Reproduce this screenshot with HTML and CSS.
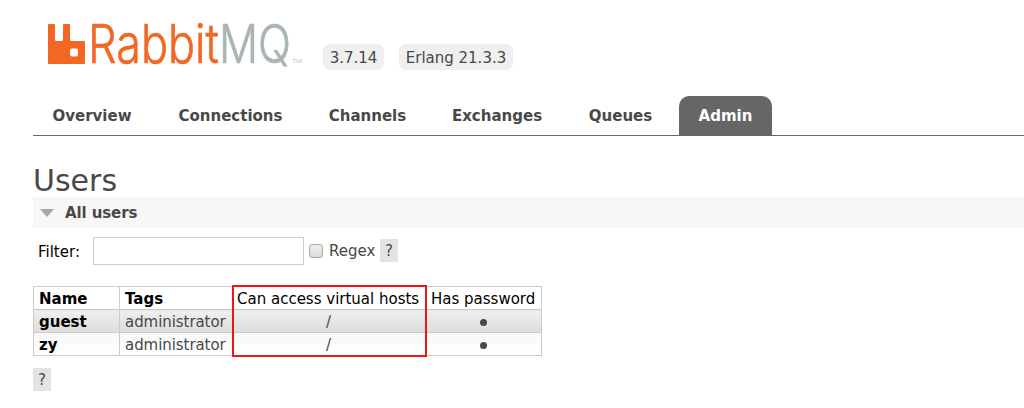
FILE: index.html
```html
<!DOCTYPE html>
<html lang="en">
<head>
<meta charset="utf-8">
<title>RabbitMQ Management</title>
<link rel="stylesheet" href="styles.css">
</head>
<body>
<header class="header">
  <svg class="logo" width="270" height="90" viewBox="0 -20 270 90" role="img" aria-label="RabbitMQ">
    <path class="logo-mark" fill-rule="evenodd" d="M1 4H6Q7 4 7 5V19.500Q7 21 8.500 21H13.500Q15 21 15 19.500V5Q15 4 16 4H21Q22 4 22 5V19.500Q22 21 23.500 21H36Q37 21 37 22V43Q37 44 36 44H1Q0 44 0 43V5Q0 4 1 4ZM24 28.500Q22 28.500 22 30.500V34Q22 36.500 24 36.500H28Q30 36.500 30 34V30.500Q30 28.500 28 28.500Z"/>
    <text class="logo-text orange" x="40" y="43" textLength="131" lengthAdjust="spacingAndGlyphs">Rabbit</text>
    <text class="logo-text gray" x="171" y="43" textLength="72" lengthAdjust="spacingAndGlyphs">MQ</text>
    <text class="logo-tm" x="244.500" y="43" textLength="9.500" lengthAdjust="spacingAndGlyphs">TM</text>
  </svg>
  <span class="version v1">3.7.14</span>
  <span class="version v2">Erlang 21.3.3</span>
</header>
<nav class="tabs">
  <a class="tab overview">Overview</a>
  <a class="tab connections">Connections</a>
  <a class="tab channels">Channels</a>
  <a class="tab exchanges">Exchanges</a>
  <a class="tab queues">Queues</a>
  <a class="tab admin">Admin</a>
</nav>
<main class="main">
  <h1 class="title">Users</h1>
  <h2 class="section"><svg class="arrow" width="14" height="8" viewBox="0 0 14 8"><path d="M0 0H14L7 8Z"/></svg>All users</h2>
  <div class="filter">
    <label class="filter-label" for="f">Filter:</label>
    <input class="filter-input" id="f" type="text">
    <span class="checkbox"></span>
    <span class="regex">Regex</span>
    <span class="help">?</span>
  </div>
  <div class="table-wrap">
    <table class="users">
      <colgroup><col class="c1"><col class="c2"><col class="c3"><col class="c4"></colgroup>
      <tr><th class="bold">Name</th><th class="bold">Tags</th><th>Can access virtual hosts</th><th>Has password</th></tr>
      <tr class="alt"><td class="bold">guest</td><td class="tag">administrator</td><td class="center">/</td><td class="center"><i class="dot"></i></td></tr>
      <tr class="plain"><td class="bold">zy</td><td class="tag">administrator</td><td class="center">/</td><td class="center"><i class="dot"></i></td></tr>
    </table>
    <div class="highlight"></div>
  </div>
  <span class="help bottom">?</span>
</main>
</body>
</html>
```
FILE: styles.css
```css
* { box-sizing: border-box; }
body { margin: 0; width: 1024px; height: 408px; overflow: hidden; background: #fff; color: #484848; font: 15px/20px Verdana, "DejaVu Sans", sans-serif; }
.header { display: flex; height: 96px; padding-left: 48px; }
.logo { display: block; flex: none; }
.logo-mark, .orange { fill: #f26724; }
.logo-text { font: 300 54px Inter, sans-serif; stroke-width: 0.7px; }
.orange { stroke: #f26724; }
.gray { fill: #a9b5b0; stroke: #a9b5b0; }
.logo-tm { font: 6px "Open Sans", sans-serif; fill: #b9c1be; }
.version { height: 26px; margin-top: 44px; padding: 4px 0; border-radius: 7px; background: #efefef; text-align: center; white-space: nowrap; }
.v1 { width: 61px; margin-left: 5px; }
.v2 { width: 114px; margin-left: 15px; }
.tabs { display: flex; height: 40px; margin-left: 33px; border-bottom: 1px solid #666; }
.tab { display: block; height: 39px; padding-top: 1px; line-height: 39px; text-align: center; font-weight: bold; white-space: nowrap; }
.overview { width: 118px; }
.connections { width: 159px; }
.channels { width: 115px; }
.exchanges { width: 144px; }
.queues { width: 103px; }
.admin { width: 93px; margin-left: 7px; border-radius: 10px 10px 0 0; background: #666; color: #fff; }
.main { padding: 25px 0 0 33px; }
.title { margin: 0; height: 36px; font-size: 30px; line-height: 40px; font-weight: normal; }
.section { display: flex; align-items: center; margin: 0; height: 31px; padding-left: 7px; background: #f7f7f7; font-size: 15px; letter-spacing: -0.1px; }
.arrow { margin-right: 11px; fill: #a8a8a8; }
.filter { display: flex; align-items: center; height: 28px; margin-top: 9px; padding-left: 5px; }
.filter-label { width: 55px; color: #000; padding-top: 1px; }
.filter-input { width: 211px; height: 28px; border: 1px solid #ccc; background: #fff; }
.checkbox { width: 14px; height: 14px; margin: 0 6px 0 5px; border: 1px solid #aaa; border-radius: 3px; background: linear-gradient(#eee, #dcdcdc); }
.regex { width: 51px; }
.help { display: block; width: 18px; height: 23px; padding-top: 1px; line-height: 23px; background: #e3e3e3; text-align: center; }
.filter .help { margin-top: -2px; }
.table-wrap { position: relative; margin-top: 21px; }
.users { width: 509px; border-collapse: collapse; table-layout: fixed; }
.c1 { width: 86px; }
.c2 { width: 113px; }
.c3 { width: 194px; }
.c4 { width: 115px; }
.users th, .users td { height: 23px; padding: 2px 0 0 5px; border: 1px solid #ccc; font-weight: normal; line-height: 20px; text-align: left; white-space: nowrap; }
.users th { color: #000; }
.users th:nth-child(3), .users th:nth-child(4) { padding-left: 4px; }
.users .bold { color: #000; font-weight: bold; }
.users .tag { letter-spacing: -0.06px; }
.users .center { padding-left: 0; padding-right: 2px; text-align: center; }
.alt td { background: linear-gradient(#efefef, #dddddd); }
.plain td { background: linear-gradient(#f8f8f8, #fff); }
.dot { display: inline-block; width: 7px; height: 7px; border-radius: 50%; background: #484848; vertical-align: 1px; }
.highlight { position: absolute; left: 199px; top: -1px; width: 195px; height: 72px; border: 2px solid #ed1515; }
.bottom { margin-top: 12px; }
```
